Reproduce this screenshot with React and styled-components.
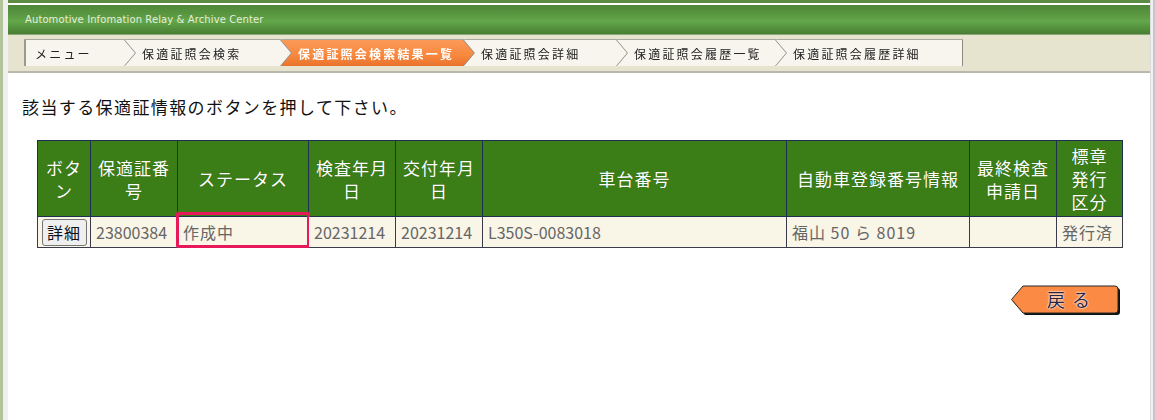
import React from 'react';
import styled, { createGlobalStyle } from 'styled-components';

const GlobalStyle = createGlobalStyle`
  html, body {
    margin: 0;
    padding: 0;
    background: #ffffff;
  }
  body {
    font-family: "Noto Sans CJK JP", "Noto Sans", sans-serif;
  }
`;

const Shell = styled.div`
  display: flex;
  width: 1155px;
  height: 420px;
  overflow: hidden;
`;

const LeftRail = styled.div`
  width: 3px;
  background: #b3c49a;
  border-right: 5px solid #efefef;
`;

const RightRail = styled.div`
  width: 2px;
  background: #f0f0f0;
  border-left: 1px solid #dcdcdc;
  border-right: 2px solid #c9c2d0;
`;

const Page = styled.div`
  flex: 1;
  display: flex;
  flex-direction: column;
`;

const TopStrip = styled.div`
  height: 3px;
  background: #5c8c44;
  border-bottom: 2px solid #ffffff;
`;

const Banner = styled.div`
  height: 29px;
  display: flex;
  align-items: center;
  padding-left: 17px;
  background: linear-gradient(to bottom, #4f8739 0%, #5c9b43 40%, #64a74a 55%, #579640 75%, #4a7d33 100%);
  border-bottom: 1px solid #8aa87a;
  font-family: "DejaVu Sans", Verdana, sans-serif;
  font-size: 10px;
  color: #e6efdc;
  letter-spacing: 0.1px;
`;

const CrumbBand = styled.div`
  height: 36px;
  background: #e6e4ce;
  border-bottom: 2px solid #b9b8ac;
  display: flex;
  align-items: center;
  padding-left: 16px;
`;

const CrumbRow = styled.div`
  display: flex;
  filter: drop-shadow(1px 0 0 #8c8c84) drop-shadow(0 -1px 0 #a8a8a0);
`;

const Crumb = styled.div`
  width: ${p => p.w}px;
  height: 26px;
  box-sizing: border-box;
  margin-left: ${p => (p.first ? 0 : -10)}px;
  padding-left: ${p => (p.first ? 9 : 17)}px;
  display: flex;
  align-items: center;
  font-size: 12px;
  letter-spacing: 2.2px;
  color: ${p => (p.active ? '#ffffff' : '#222222')};
  font-weight: ${p => (p.active ? 'bold' : 'normal')};
  background: ${p => (p.active
    ? 'linear-gradient(to bottom, #fb9a58 0%, #f7883e 60%, #e9722c 100%)'
    : '#f7f5ee')};
  border-left: ${p => (p.first ? '2px solid #9a9a92' : 'none')};
  clip-path: ${p => {
    if (p.last) return 'polygon(0 0, 100% 0, 100% 100%, 0 100%, 11px 50%)';
    if (p.first) return 'polygon(0 0, calc(100% - 11px) 0, 100% 50%, calc(100% - 11px) 100%, 0 100%)';
    return 'polygon(0 0, calc(100% - 11px) 0, 100% 50%, calc(100% - 11px) 100%, 0 100%, 11px 50%)';
  }};
`;

const Content = styled.div`
  padding: 22px 0 0 14px;
`;

const Lead = styled.div`
  font-size: 17px;
  letter-spacing: 1.4px;
  color: #111111;
  line-height: 24px;
`;

const Table = styled.table`
  margin: 21px 0 0 29px;
  width: 1085px;
  table-layout: fixed;
  border-collapse: collapse;
  font-size: 16px;
`;

const Col = styled.col`
  width: ${p => p.w}px;
`;

const Th = styled.th`
  background: #3b7e18;
  color: #ffffff;
  font-weight: normal;
  font-size: 17px;
  letter-spacing: 1px;
  line-height: 23px;
  height: 75px;
  padding: 0;
  text-align: center;
  vertical-align: middle;
  border: 1px solid #1f2f4f;
  text-shadow: 0 0 1px rgba(0, 0, 0, 0.3);
  white-space: nowrap;
`;

const Td = styled.td`
  position: relative;
  background: #f9f5e7;
  color: #666666;
  height: 30px;
  padding: 0 ${p => (p.center ? 3 : 5)}px;
  border: 1px solid #3a3a4a;
  white-space: nowrap;
  text-align: ${p => (p.center ? 'center' : 'left')};
  letter-spacing: ${p => (p.cjk ? '1px' : '0')};
`;

const Highlight = styled.span`
  position: absolute;
  left: -2px;
  right: -2px;
  top: -5px;
  bottom: -1px;
  border: 3px solid #e8195a;
  border-radius: 2px;
  pointer-events: none;
`;

const DetailButton = styled.button`
  font-family: "Noto Sans CJK JP", sans-serif;
  font-size: 16px;
  color: #111111;
  background: #efefef;
  border: 1px solid #767676;
  border-radius: 3px;
  width: 45px;
  height: 27px;
  padding: 0;
  letter-spacing: 1px;
`;

const Footer = styled.div`
  display: flex;
  justify-content: flex-end;
  width: 1113px;
  margin-top: 37px;
`;

const BackButton = styled.div`
  position: relative;
  width: 110px;
  height: 30px;
`;

const BackLabel = styled.span`
  position: absolute;
  left: 36px;
  top: 0;
  height: 28px;
  display: flex;
  align-items: center;
  font-size: 18px;
  letter-spacing: 7px;
  color: #2a2440;
  text-shadow: 0 0 2px #ffffff, 0 0 2px #ffffff;
`;

const crumbs = [
  { label: 'メニュー', w: 111, first: true },
  { label: '保適証照会検索', w: 166 },
  { label: '保適証照会検索結果一覧', w: 193, active: true },
  { label: '保適証照会詳細', w: 163 },
  { label: '保適証照会履歴一覧', w: 169 },
  { label: '保適証照会履歴詳細', w: 186, last: true },
];

const headers = [
  { label: 'ボタ\nン', w: 53 },
  { label: '保適証番\n号', w: 87 },
  { label: 'ステータス', w: 131 },
  { label: '検査年月\n日', w: 87 },
  { label: '交付年月\n日', w: 87 },
  { label: '車台番号', w: 304 },
  { label: '自動車登録番号情報', w: 183 },
  { label: '最終検査\n申請日', w: 87 },
  { label: '標章\n発行\n区分', w: 66 },
];

const App = () => (
  <>
    <GlobalStyle />
    <Shell>
      <LeftRail />
      <Page>
        <TopStrip />
        <Banner>Automotive Infomation Relay &amp; Archive Center</Banner>
        <CrumbBand>
          <CrumbRow>
            {crumbs.map(c => (
              <Crumb key={c.label} w={c.w} first={c.first} last={c.last} active={c.active}>
                {c.label}
              </Crumb>
            ))}
          </CrumbRow>
        </CrumbBand>
        <Content>
          <Lead>該当する保適証情報のボタンを押して下さい。</Lead>
        </Content>
        <Table>
          <colgroup>
            {headers.map(h => (
              <Col key={h.label} w={h.w} />
            ))}
          </colgroup>
          <thead>
            <tr>
              {headers.map(h => (
                <Th key={h.label}>
                  {h.label.split('\n').map((line, i) => (
                    <div key={i}>{line}</div>
                  ))}
                </Th>
              ))}
            </tr>
          </thead>
          <tbody>
            <tr>
              <Td center>
                <DetailButton>詳細</DetailButton>
              </Td>
              <Td>23800384</Td>
              <Td cjk>
                作成中
                <Highlight />
              </Td>
              <Td>20231214</Td>
              <Td>20231214</Td>
              <Td>L350S-0083018</Td>
              <Td cjk>福山 50 ら 8019</Td>
              <Td />
              <Td cjk>発行済</Td>
            </tr>
          </tbody>
        </Table>
        <Footer>
          <BackButton>
            <svg width="110" height="30" viewBox="0 0 110 30">
              <path d="M14 3 H106 Q109 3 109 6 V27 Q109 30 106 30 H14 L2 16.5 Z" fill="#111111" />
              <path d="M12 1 H104 Q107 1 107 4 V25 Q107 28 104 28 H12 L0.5 14.5 Z" fill="#fb8a44" stroke="#2a2a2a" strokeWidth="1" />
            </svg>
            <BackLabel>戻る</BackLabel>
          </BackButton>
        </Footer>
      </Page>
      <RightRail />
    </Shell>
  </>
);

export default App;
